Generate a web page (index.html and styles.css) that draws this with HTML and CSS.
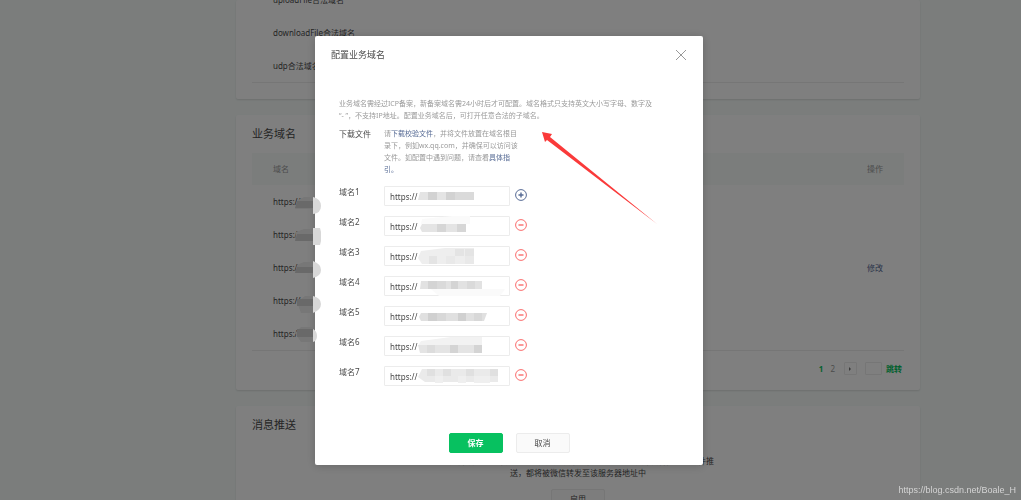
FILE: index.html
```html
<!DOCTYPE html>
<html>
<head>
  <title>开发设置</title>
  <meta charset="UTF-8">
  <link rel="stylesheet" href="styles.css">
</head>
<body>
  <main class="page">
    <section class="panel panel-server">
      <ul class="server-list">
        <li>uploadFile合法域名</li>
        <li>downloadFile合法域名</li>
        <li>udp合法域名</li>
      </ul>
    </section>

    <section class="panel panel-domain">
      <h2>业务域名</h2>
      <table class="domain-table">
        <thead>
          <tr><th>域名</th><th class="op">操作</th></tr>
        </thead>
        <tbody>
          <tr><td>https://</td><td class="op"></td></tr>
          <tr><td>https://</td><td class="op"></td></tr>
          <tr><td>https://</td><td class="op"><a href="#">修改</a></td></tr>
          <tr><td>https://</td><td class="op"></td></tr>
          <tr><td>https://</td><td class="op"></td></tr>
        </tbody>
      </table>
      <div class="pagination">
        <a class="current" href="#">1</a>
        <a class="num" href="#">2</a>
        <button class="next" type="button" aria-label="下一页"></button>
        <input class="goto" type="text" aria-label="页码">
        <a class="jump" href="#">跳转</a>
      </div>
    </section>

    <section class="panel panel-push">
      <h2>消息推送</h2>
      <p>启用并设置消息推送配置后，用户发给小程序的消息以及开发者需要的事件推<br>送，都将被微信转发至该服务器地址中</p>
      <button class="btn" type="button">启用</button>
    </section>
  </main>

  <div class="mask">
    <div class="dialog" role="dialog" aria-labelledby="dialog-title">
      <header class="dialog-head">
        <h3 id="dialog-title">配置业务域名</h3>
        <button class="close" type="button" aria-label="关闭">
          <svg width="12" height="12" viewBox="0 0 12 12"><path d="M1 1L11 11M11 1L1 11" stroke="#999" fill="none"/></svg>
        </button>
      </header>

      <form class="dialog-body">
        <p class="intro">业务域名需经过ICP备案，新备案域名需24小时后才可配置。域名格式只支持英文大小写字母、数字及<br>“- ”，不支持IP地址。配置业务域名后，可打开任意合法的子域名。</p>

        <div class="row row-file">
          <span class="name">下载文件</span>
          <p class="help">请<a href="#">下载校验文件</a>，并将文件放置在域名根目<br>录下，例如wx.qq.com，并确保可以访问该<br>文件。如配置中遇到问题，请查看<a href="#">具体指<br>引。</a></p>
        </div>

        <div class="row">
          <label class="name" for="d1">域名1</label>
          <div class="field">
            <input id="d1" type="text" value="https://">
            <svg class="mosaic" width="90" height="20"><path fill="#e4e4e4" d="M3 6h54v8H1z"/><path fill="#d2d2d2" d="M11 6h9v8h-9zM29 6h9v8h-9z"/><path fill="#dadada" d="M38 6h19v8H38z"/></svg>
          </div>
          <button class="icon add" type="button" aria-label="添加"><svg width="12" height="12" viewBox="0 0 12 12"><circle cx="6" cy="6" r="5.4"/><path d="M3.5 6h5M6 3.5v5"/></svg></button>
        </div>
        <div class="row">
          <label class="name" for="d2">域名2</label>
          <div class="field">
            <input id="d2" type="text" value="https://">
            <svg class="mosaic" width="90" height="20"><path fill="#fafafa" d="M5 3l30-3h18v8H4z"/><path fill="#e4e4e4" d="M5 8h44v8H5l-2-4z"/><path fill="#d6d6d6" d="M20 8h9v8h-9zM40 8h9v8h-9z"/></svg>
          </div>
          <button class="icon del" type="button" aria-label="删除"><svg width="12" height="12" viewBox="0 0 12 12"><circle cx="6" cy="6" r="5.4"/><path d="M3.5 6h5"/></svg></button>
        </div>
        <div class="row">
          <label class="name" for="d3">域名3</label>
          <div class="field">
            <input id="d3" type="text" value="https://">
            <svg class="mosaic" width="90" height="20"><path fill="#eee" d="M4 5l24-3h29v16H5L1 12z"/><path fill="#e4e4e4" d="M38 3h9v7h-9zM48 3h9v7h-9zM12 10h8v8h-8z"/><path fill="#e9e9e9" d="M29 10h9v8h-9zM48 10h9v8h-9z"/></svg>
          </div>
          <button class="icon del" type="button" aria-label="删除"><svg width="12" height="12" viewBox="0 0 12 12"><circle cx="6" cy="6" r="5.4"/><path d="M3.5 6h5"/></svg></button>
        </div>
        <div class="row">
          <label class="name" for="d4">域名4</label>
          <div class="field">
            <input id="d4" type="text" value="https://">
            <svg class="mosaic" width="90" height="20"><path fill="#fafafa" d="M14 13h74l-5 7H22z"/><path fill="#e2e2e2" d="M4 5h61v8H3z"/><path fill="#d4d4d4" d="M11 5h9v8h-9zM34 5h7v8h-7z"/><path fill="#dadada" d="M20 5h9v8h-9zM50 5h8v8h-8z"/></svg>
          </div>
          <button class="icon del" type="button" aria-label="删除"><svg width="12" height="12" viewBox="0 0 12 12"><circle cx="6" cy="6" r="5.4"/><path d="M3.5 6h5"/></svg></button>
        </div>
        <div class="row">
          <label class="name" for="d5">域名5</label>
          <div class="field">
            <input id="d5" type="text" value="https://">
            <svg class="mosaic" width="90" height="20"><path fill="#e0e0e0" d="M4 7h66l-3 8H4l-2-4z"/><path fill="#d0d0d0" d="M11 7h9v8h-9zM41 7h8v8h-8z"/><path fill="#d8d8d8" d="M20 7h9v8h-9zM57 7h8v8h-8z"/></svg>
          </div>
          <button class="icon del" type="button" aria-label="删除"><svg width="12" height="12" viewBox="0 0 12 12"><circle cx="6" cy="6" r="5.4"/><path d="M3.5 6h5"/></svg></button>
        </div>
        <div class="row">
          <label class="name" for="d6">域名6</label>
          <div class="field">
            <input id="d6" type="text" value="https://">
            <svg class="mosaic" width="90" height="20"><path fill="#f2f2f2" d="M4 5l30-4h31v9H1z"/><path fill="#e4e4e4" d="M1 9h64v8H3z"/><path fill="#d4d4d4" d="M33 9h8v8h-8zM57 9h8v8h-8z"/><path fill="#dcdcdc" d="M10 9h8v8h-8z"/></svg>
          </div>
          <button class="icon del" type="button" aria-label="删除"><svg width="12" height="12" viewBox="0 0 12 12"><circle cx="6" cy="6" r="5.4"/><path d="M3.5 6h5"/></svg></button>
        </div>
        <div class="row">
          <label class="name" for="d7">域名7</label>
          <div class="field">
            <input id="d7" type="text" value="https://">
            <svg class="mosaic" width="90" height="20"><path fill="#eaeaea" d="M5 3h76v13H8l-7-5z"/><path fill="#e0e0e0" d="M10 3h8v7h-8zM26 3h8v7h-8zM49 3h8v7h-8zM73 3h8v7h-8z"/><path fill="#efefef" d="M18 10h8v7h-8zM41 10h8v7h-8zM57 10h16v7H57z"/></svg>
          </div>
          <button class="icon del" type="button" aria-label="删除"><svg width="12" height="12" viewBox="0 0 12 12"><circle cx="6" cy="6" r="5.4"/><path d="M3.5 6h5"/></svg></button>
        </div>
      </form>

      <footer class="dialog-foot">
        <button class="btn primary" type="button">保存</button>
        <button class="btn" type="button">取消</button>
      </footer>

      <!-- 列表域名打码 -->
      <svg class="blur-list" width="28" height="150" viewBox="0 0 28 150">
        <g fill="#777">
          <path d="M3 3l6-3h9v12H0zM1 35l8-3h9v12H0zM2 68l7-3h9v11H0zM2 105l8-6h8v17H6zM0 136l6-6h12v15H6z"/>
        </g>
        <g fill="#696969">
          <path d="M2 4h16v7H0zM2 37h16v7H0zM2 70h16v6H0zM2 102h16v7H2zM2 132h16v8H2z"/>
        </g>
        <g fill="#d8d8d8">
          <path d="M18 0q8 2 8 9t-8 8zM18 31h7l1 4v9l-1 4h-7zM18 64q8 3 8 9t-8 8zM18 99q8 2 8 8t-8 9zM18 132q4 2 4 7t-4 6z"/>
        </g>
      </svg>

      <svg class="arrow" width="116" height="94" viewBox="0 0 116 94">
        <path fill="#fa3a3a" d="M0 0L10 2L8 5L115 92L5 8L3 10Z"/>
      </svg>
    </div>
  </div>

  <div class="watermark">https://blog.csdn.net/Boale_H</div>
</body>
</html>
```
FILE: styles.css
```css
* {
  box-sizing: border-box;
}

body {
  margin: 0;
  height: 100vh;
  overflow: hidden;
  background: #f6fbf9;
  color: #4a4a4a;
  font: 8px/12px "Noto Sans", "Noto Sans CJK SC", sans-serif;
}

h2, h3, p, ul {
  margin: 0;
  padding: 0;
  font-weight: normal;
}

a {
  color: #576b95;
  text-decoration: none;
}

button, input {
  font: inherit;
  color: inherit;
}

/* 页面内容 */
.page {
  display: flex;
  flex-direction: column;
  gap: 16px;
  padding: 0 101px 0 236px;
}

.panel {
  background: #fff;
  padding: 0 16px;
  border-radius: 2px;
  box-shadow: 0 1px 2px rgba(0, 0, 0, 0.12);
}

.panel h2 {
  font-size: 11px;
  line-height: 38px;
}

.panel-server {
  padding-bottom: 16px;
}

.server-list {
  list-style: none;
  border-bottom: 1px solid #ececec;
  margin-top: -17px;
}

.server-list li {
  padding-left: 21px;
  line-height: 33px;
}

.domain-table {
  width: 100%;
  border-spacing: 0;
  border-bottom: 1px solid #ececec;
}

.domain-table th {
  height: 32px;
  padding: 0 21px;
  background: #f6fbf9;
  color: #9a9a9a;
  font-weight: normal;
  text-align: left;
}

.domain-table td {
  height: 33px;
  padding: 0 21px;
}

.domain-table .op {
  text-align: right;
}

.pagination {
  display: flex;
  align-items: center;
  justify-content: flex-end;
  height: 39px;
  padding: 0 2px 4px 0;
}

.pagination .current,
.pagination .jump {
  color: #07c160;
  font-weight: bold;
}

.pagination .num {
  margin: 0 9px 0 7px;
  color: #9a9a9a;
}

.pagination .next {
  width: 13px;
  height: 13px;
  margin-right: 8px;
  padding: 4px;
  border: 1px solid #ececec;
  border-radius: 1px;
  background: none;
}

.next::before {
  content: "";
  display: block;
  width: 0;
  border: 2px solid transparent;
  border-left-color: #777;
}

.pagination .goto {
  width: 17px;
  height: 13px;
  margin-right: 4px;
  border: 1px solid #ececec;
  border-radius: 1px;
}

.panel-push {
  height: 110px;
}

.panel-push p {
  margin-top: 11px;
  text-align: center;
}

.panel-push .btn {
  display: block;
  margin: 10px auto 0;
}

/* 弹窗 */
.mask {
  position: fixed;
  inset: 0;
  display: flex;
  align-items: center;
  justify-content: center;
  padding: 1px 3px 0 0;
  background: rgba(0, 0, 0, 0.5);
}

.dialog {
  position: relative;
  width: 388px;
  padding-bottom: 12px;
  border-radius: 2px;
  background: #fff;
  box-shadow: 0 1px 10px rgba(0, 0, 0, 0.2);
}

.dialog-head {
  display: flex;
  align-items: center;
  justify-content: space-between;
  height: 38px;
  padding: 0 16px;
}

.dialog-head h3 {
  font-size: 9px;
}

.close, .icon {
  display: block;
  height: 12px;
  padding: 0;
  border: 0;
  background: none;
}

.dialog-body {
  padding: 24px 24px 0;
}

.intro, .help {
  color: #9a9a9a;
  font-size: 7px;
}

.row {
  display: grid;
  grid-template-columns: 45px 126px 12px;
  margin-top: 10px;
}

.row-file {
  grid-template-columns: 45px 1fr;
  margin-top: 6px;
}

.field {
  position: relative;
  height: 20px;
}

.field input {
  display: block;
  width: 100%;
  height: 20px;
  padding: 0 5px;
  border: 1px solid #ececec;
  border-radius: 1px;
  background: #fff;
}

.mosaic {
  position: absolute;
  left: 33px;
  top: 0;
}

.icon {
  margin: 3px 0 0 5px;
}

.icon svg {
  display: block;
  fill: none;
}

.icon path {
  stroke-width: 1.4;
}

.add svg {
  stroke: #576b95;
}

.del svg {
  stroke: #fa6c6c;
}

.dialog-foot {
  display: flex;
  justify-content: center;
  gap: 13px;
  margin-top: 47px;
}

.btn {
  width: 54px;
  height: 20px;
  padding: 0;
  border: 1px solid #ececec;
  border-radius: 2px;
  background: #fafafa;
}

.btn.primary {
  border-color: #07c160;
  background: #07c160;
  color: #fff;
  font-weight: bold;
}

.blur-list {
  position: absolute;
  left: -20px;
  top: 161px;
}

.arrow {
  position: absolute;
  left: 227px;
  top: 96px;
}

.watermark {
  position: fixed;
  right: 5px;
  bottom: 4px;
  color: #d4d4d4;
  font: 9px/12px "Liberation Sans", sans-serif;
}
```
